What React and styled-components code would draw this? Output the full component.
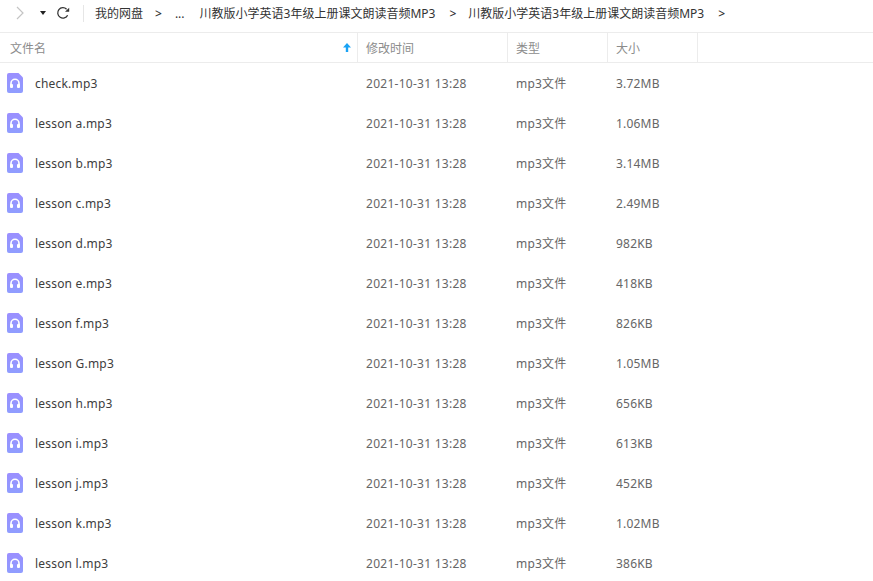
import React from 'react';
import styled, { createGlobalStyle } from 'styled-components';

const GlobalStyle = createGlobalStyle`
    html, body {
        margin: 0;
        padding: 0;
        background: #fff;
        overflow: hidden;
    }
    body {
        font-family: "Noto Sans", "Noto Sans CJK SC", sans-serif;
    }
`;

const files = [
    { name: 'check.mp3', size: '3.72MB' },
    { name: 'lesson a.mp3', size: '1.06MB' },
    { name: 'lesson b.mp3', size: '3.14MB' },
    { name: 'lesson c.mp3', size: '2.49MB' },
    { name: 'lesson d.mp3', size: '982KB' },
    { name: 'lesson e.mp3', size: '418KB' },
    { name: 'lesson f.mp3', size: '826KB' },
    { name: 'lesson G.mp3', size: '1.05MB' },
    { name: 'lesson h.mp3', size: '656KB' },
    { name: 'lesson i.mp3', size: '613KB' },
    { name: 'lesson j.mp3', size: '452KB' },
    { name: 'lesson k.mp3', size: '1.02MB' },
    { name: 'lesson l.mp3', size: '386KB' },
];

const Page = styled.div`
    width: 873px;
    height: 581px;
    overflow: hidden;
    background: #fff;
`;

const Toolbar = styled.div`
    display: flex;
    align-items: center;
    height: 26px;
    padding-bottom: 6px;
    border-bottom: 1px solid #ececec;
    font-size: 12px;
    color: #333;
`;

const NavIcons = styled.div`
    display: flex;
    align-items: center;
    width: 84px;
    height: 17px;
    margin-right: 11px;
    border-right: 1px solid #e6e6e6;
    padding-left: 16px;
    box-sizing: border-box;
    svg {
        display: block;
    }
`;

const CaretWrap = styled.span`
    margin-left: 16px;
    margin-right: 10px;
`;

const Crumb = styled.span`
    white-space: nowrap;
    margin-right: ${(p) => p.$gap}px;
`;

const Sep = styled.span`
    margin-right: ${(p) => p.$gap}px;
    font-size: 12px;
    font-weight: 500;
    color: #333;
`;

const HeaderRow = styled.div`
    display: flex;
    height: 29px;
    border-bottom: 1px solid #ececec;
    font-size: 12px;
    color: #8c8c8c;
`;

const HeadCell = styled.div`
    display: flex;
    align-items: center;
    justify-content: space-between;
    box-sizing: border-box;
    width: ${(p) => p.$w}px;
    padding: 0 6px 0 ${(p) => p.$pad}px;
    border-right: 1px solid #ececec;
`;

const Row = styled.div`
    display: flex;
    align-items: center;
    height: 40px;
    font-size: 12px;
    color: #666;
`;

const NameCell = styled.div`
    display: flex;
    align-items: center;
    width: 358px;
    padding-left: 7px;
    box-sizing: border-box;
    color: #3d3d3d;
`;

const FileName = styled.span`
    margin-left: 12px;
    letter-spacing: 0.2px;
`;

const Cell = styled.div`
    box-sizing: border-box;
    width: ${(p) => p.$w}px;
    padding-left: ${(p) => p.$pad}px;
    white-space: nowrap;
    letter-spacing: ${(p) => p.$track || 0}px;
`;

const FileIcon = () => (
    <svg width="16" height="20" viewBox="0 0 16 20">
        <defs>
            <linearGradient id="fileGrad" x1="0" y1="0" x2="0" y2="1">
                <stop offset="0" stopColor="#9b8fff" />
                <stop offset="1" stopColor="#8f9dff" />
            </linearGradient>
        </defs>
        <path d="M2 0H11.5L16 4.5V18a2 2 0 0 1-2 2H2a2 2 0 0 1-2-2V2a2 2 0 0 1 2-2Z" fill="url(#fileGrad)" />
        <path d="M4 13.5V10.3a4 4 0 0 1 8 0v3.2" fill="none" stroke="#fff" strokeWidth="1.6" />
        <rect x="3" y="11" width="3" height="4" rx="1" fill="#fff" />
        <rect x="10" y="11" width="3" height="4" rx="1" fill="#fff" />
    </svg>
);

const App = () => {
    const folder = '川教版小学英语3年级上册课文朗读音频MP3';
    return (
        <Page>
            <GlobalStyle />
            <Toolbar>
                <NavIcons>
                    <svg width="8" height="14" viewBox="0 0 8 14">
                        <path d="M1 1l6 6-6 6" fill="none" stroke="#c4c4c4" strokeWidth="1.2" />
                    </svg>
                    <CaretWrap>
                        <svg width="6" height="4" viewBox="0 0 6 4">
                            <path d="M0 0h6L3 4Z" fill="#222" />
                        </svg>
                    </CaretWrap>
                    <svg width="14" height="14" viewBox="0 0 14 14">
                        <path d="M11.6 9.2A5.2 5.2 0 1 1 10.6 3.2" fill="none" stroke="#333" strokeWidth="1.3" />
                        <path d="M9 5.8h4.2V1.8Z" fill="#333" />
                    </svg>
                </NavIcons>
                <Crumb $gap={12}>我的网盘</Crumb>
                <Sep $gap={13}>&gt;</Sep>
                <Crumb $gap={15}>...</Crumb>
                <Crumb $gap={14}>{folder}</Crumb>
                <Sep $gap={12}>&gt;</Sep>
                <Crumb $gap={14}>{folder}</Crumb>
                <Sep $gap={0}>&gt;</Sep>
            </Toolbar>
            <HeaderRow>
                <HeadCell $w={358} $pad={10}>
                    文件名
                    <svg width="8" height="9" viewBox="0 0 8 9">
                        <path d="M4 0L8 4.5H5.2V9H2.8V4.5H0Z" fill="#1aa3f5" />
                    </svg>
                </HeadCell>
                <HeadCell $w={150} $pad={8}>修改时间</HeadCell>
                <HeadCell $w={100} $pad={8}>类型</HeadCell>
                <HeadCell $w={90} $pad={8}>大小</HeadCell>
            </HeaderRow>
            {files.map((file, index) => (
                <Row key={index}>
                    <NameCell>
                        <FileIcon />
                        <FileName>{file.name}</FileName>
                    </NameCell>
                    <Cell $w={150} $pad={8} $track={0.27}>2021-10-31 13:28</Cell>
                    <Cell $w={100} $pad={8} $track={0.2}>mp3文件</Cell>
                    <Cell $w={90} $pad={8} $track={0.2}>{file.size}</Cell>
                </Row>
            ))}
        </Page>
    );
};

export default App;
